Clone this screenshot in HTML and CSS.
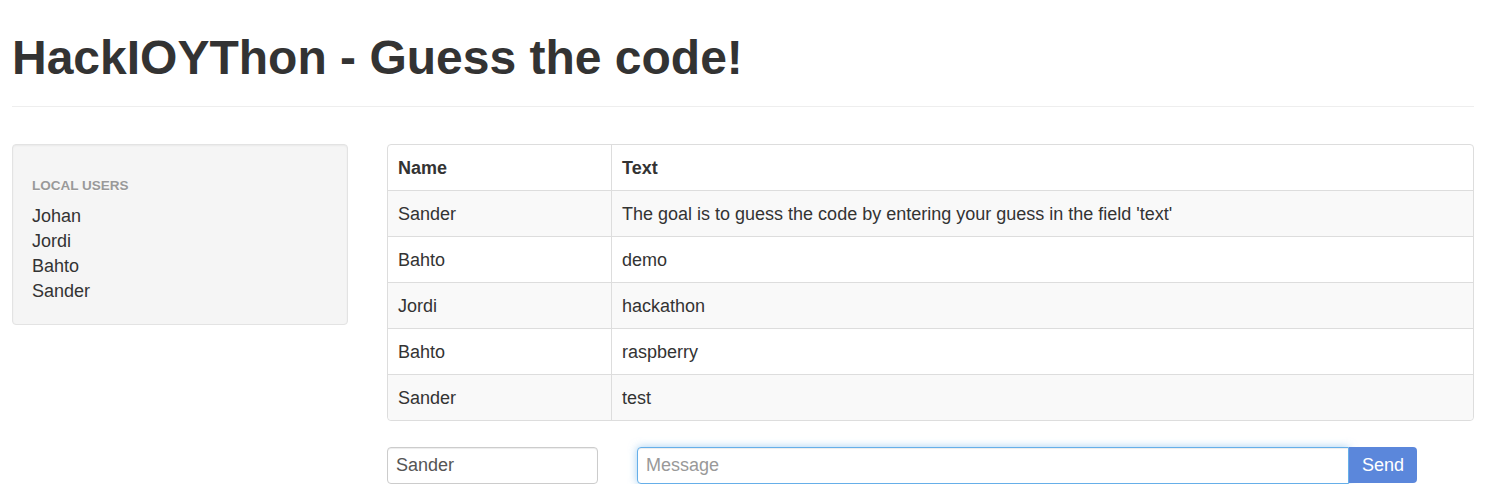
FILE: index.html
```html
<!DOCTYPE html>
<html lang="en">
<head>
  <meta charset="UTF-8">
  <meta name="viewport" content="width=device-width, initial-scale=1.0">
  <title>HackIOYThon</title>
  <link rel="stylesheet" href="styles.css">
</head>
<body>
  <div class="container">
    <div class="page-header">
      <h1>HackIOYThon - Guess the code!</h1>
    </div>
    <div class="row">
      <div class="sidebar">
        <div class="well">
          <h5 class="nav-header">Local users</h5>
          <ul class="user-list">
            <li>Johan</li>
            <li>Jordi</li>
            <li>Bahto</li>
            <li>Sander</li>
          </ul>
        </div>
      </div>
      <div class="content">
        <table class="messages">
          <colgroup>
            <col class="col-name">
            <col>
          </colgroup>
          <thead>
            <tr><th>Name</th><th>Text</th></tr>
          </thead>
          <tbody>
            <tr><td>Sander</td><td>The goal is to guess the code by entering your guess in the field 'text'</td></tr>
            <tr><td>Bahto</td><td>demo</td></tr>
            <tr><td>Jordi</td><td>hackathon</td></tr>
            <tr><td>Bahto</td><td>raspberry</td></tr>
            <tr><td>Sander</td><td>test</td></tr>
          </tbody>
        </table>
        <form class="send-form">
          <input type="text" class="name-input" value="Sander">
          <div class="input-group">
            <input type="text" class="message-input" placeholder="Message">
            <button type="button" class="btn-send">Send</button>
          </div>
        </form>
      </div>
    </div>
  </div>
</body>
</html>
```

FILE: styles.css
```css
* {
  box-sizing: border-box;
}

body {
  margin: 0;
  font-family: "Liberation Sans", Arial, sans-serif;
  font-size: 18px;
  color: #333333;
  background: #ffffff;
}

.container {
  width: 1462px;
  margin-left: 12px;
}

.page-header {
  padding-top: 31px;
  padding-bottom: 22px;
  border-bottom: 1px solid #eeeeee;
  margin-bottom: 37px;
}

.page-header h1 {
  margin: 0;
  font-size: 48px;
  line-height: 53px;
  font-weight: bold;
  color: #333333;
}

.row {
  display: flex;
  gap: 39px;
}

.sidebar {
  width: 336px;
  flex-shrink: 0;
}

.well {
  background-color: #f5f5f5;
  border: 1px solid #e3e3e3;
  border-radius: 4px;
  box-shadow: inset 0 1px 2px rgba(0, 0, 0, 0.05);
  padding: 31px 19px 20px 19px;
}

.nav-header {
  margin: 0 0 8px 0;
  font-size: 13.5px;
  line-height: 20px;
  font-weight: bold;
  color: #999999;
  text-transform: uppercase;
  text-shadow: 0 1px 0 rgba(255, 255, 255, 0.5);
}

.user-list {
  list-style: none;
  margin: 0;
  padding: 0;
}

.user-list li {
  line-height: 25px;
  color: #333333;
}

.content {
  flex: 1;
}

.messages {
  width: 100%;
  table-layout: fixed;
  border-collapse: separate;
  border-spacing: 0;
  border: 1px solid #dddddd;
  border-radius: 4px;
  margin-bottom: 26px;
}

.col-name {
  width: 223px;
}

.messages th,
.messages td {
  padding: 12px 10px 10px 10px;
  line-height: 23px;
  text-align: left;
  border-left: 1px solid #dddddd;
  border-top: 1px solid #dddddd;
}

.messages th:first-child,
.messages td:first-child {
  border-left: 0;
}

.messages thead th {
  border-top: 0;
  font-weight: bold;
}

.messages tbody tr:nth-child(odd) td {
  background-color: #f9f9f9;
}

.messages tbody tr:last-child td:first-child {
  border-bottom-left-radius: 4px;
}

.messages tbody tr:last-child td:last-child {
  border-bottom-right-radius: 4px;
}

.send-form {
  display: flex;
  gap: 39px;
}

.name-input,
.message-input {
  height: 37px;
  padding: 6px 8px;
  font-family: inherit;
  font-size: 18px;
  color: #555555;
  background: #ffffff;
  border: 1px solid #cccccc;
  border-radius: 4px;
  box-shadow: inset 0 1px 1px rgba(0, 0, 0, 0.075);
  outline: none;
}

.name-input {
  width: 211px;
}

.input-group {
  display: flex;
}

.message-input {
  width: 712px;
  border-color: #66afe9;
  border-radius: 4px 0 0 4px;
  box-shadow: inset 0 1px 1px rgba(0, 0, 0, 0.075), 0 0 8px rgba(102, 175, 233, 0.6);
}

.message-input::placeholder {
  color: #999999;
}

.btn-send {
  width: 68px;
  height: 36px;
  border: 0;
  border-radius: 0 4px 4px 0;
  background-color: #5b87db;
  color: #ffffff;
  font-family: inherit;
  font-size: 18px;
  cursor: pointer;
}
```
